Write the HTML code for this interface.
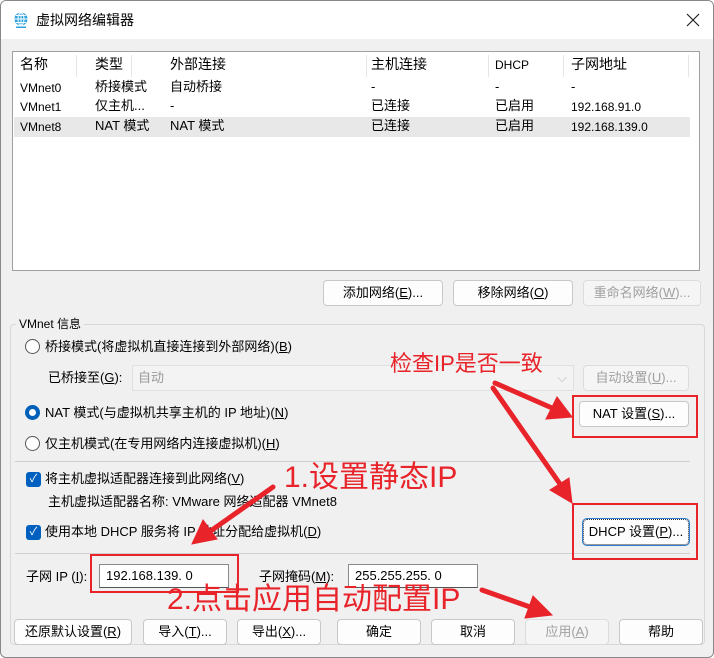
<!DOCTYPE html>
<html><head><meta charset="utf-8"><style>
*{box-sizing:border-box;margin:0;padding:0}
body{width:714px;height:658px;overflow:hidden;background:#fff;font-family:"Liberation Sans","Noto Sans CJK SC",sans-serif;font-size:13px;line-height:18px;color:#000;position:relative}
.a{position:absolute;white-space:nowrap}
.win{position:absolute;left:0;top:0;width:714px;height:658px;border:1px solid #888;border-radius:6px;background:#f0f0f0;overflow:hidden}
.title{position:absolute;left:0;top:0;width:714px;height:38px;background:#fff}
.btn{position:absolute;height:26px;border:1px solid #c8c8c8;border-radius:4px;background:#fdfdfd;text-align:center;line-height:24px;font-size:13px}
.dis{color:#a0a0a0;background:#f5f5f5;border-color:#dcdcdc}
.list{position:absolute;left:11px;top:50px;width:688px;height:220px;background:#fff;border:1px solid #a0a0a0}
.rad{position:absolute;width:15px;height:15px;border:1px solid #555;border-radius:50%;background:#fff}
.chk{position:absolute;width:15px;height:15px;border-radius:3px;background:#0060c0;color:#fff;font-size:11px;line-height:15px;text-align:center}
.red{position:absolute;border:2px solid #e8232a}
.rt{position:absolute;color:#e8232a;white-space:nowrap;line-height:1.2}
.inp{position:absolute;height:24px;background:#fff;border:1px solid #8a8a8a;border-bottom-color:#555;line-height:22px;padding-left:6px}
u{text-decoration:underline}
</style></head><body>
<div class="win">
<div class="title">
<svg class="a" style="left:11px;top:10px" width="18" height="18" viewBox="0 0 18 18"><circle cx="9" cy="8" r="6.5" fill="#2ea3dd"/><path d="M2.5 8h13M9 1.5v13M4 4.5h10M4 11.5h10" stroke="#fff" stroke-width="1" fill="none"/><ellipse cx="9" cy="8" rx="3" ry="6.5" stroke="#fff" fill="none"/><rect x="4" y="15.5" width="10" height="1.5" fill="#2ea3dd"/></svg>
<div class="a" style="left:35px;top:10px;font-size:14px">虚拟网络编辑器</div>
<svg class="a" style="left:685px;top:12px" width="14" height="14"><path d="M1 1L13 13M13 1L1 13" stroke="#222" stroke-width="1.2"/></svg>
</div>
<div class="list">
<div class="a" style="left:63px;top:3px;width:1px;height:22px;background:#e5e5e5"></div>
<div class="a" style="left:118px;top:3px;width:1px;height:22px;background:#e5e5e5"></div>
<div class="a" style="left:353px;top:3px;width:1px;height:22px;background:#e5e5e5"></div>
<div class="a" style="left:475px;top:3px;width:1px;height:22px;background:#e5e5e5"></div>
<div class="a" style="left:550px;top:3px;width:1px;height:22px;background:#e5e5e5"></div>
<div class="a" style="left:675px;top:3px;width:1px;height:22px;background:#e5e5e5"></div>
<div class="a" style="left:1px;top:65px;width:676px;height:20px;background:#e8e8e8"></div>
<div class="a" style="left:7px;top:3px;font-size:14px">名称</div>
<div class="a" style="left:82px;top:3px;font-size:14px">类型</div>
<div class="a" style="left:157px;top:3px;font-size:14px">外部连接</div>
<div class="a" style="left:358px;top:3px;font-size:14px">主机连接</div>
<div class="a" style="left:482px;top:4px;font-size:12px">DHCP</div>
<div class="a" style="left:558px;top:3px;font-size:14px">子网地址</div>
<div class="a" style="left:7px;top:27px;font-size:12px">VMnet0</div><div class="a" style="left:82px;top:26px">桥接模式</div><div class="a" style="left:157px;top:26px">自动桥接</div><div class="a" style="left:358px;top:26px">-</div><div class="a" style="left:482px;top:26px">-</div><div class="a" style="left:558px;top:26px">-</div>
<div class="a" style="left:7px;top:46px;font-size:12px">VMnet1</div><div class="a" style="left:82px;top:45px">仅主机...</div><div class="a" style="left:157px;top:45px">-</div><div class="a" style="left:358px;top:45px">已连接</div><div class="a" style="left:482px;top:45px">已启用</div><div class="a" style="left:558px;top:46px;font-size:12px">192.168.91.0</div>
<div class="a" style="left:7px;top:66px;font-size:12px">VMnet8</div><div class="a" style="left:82px;top:65px">NAT 模式</div><div class="a" style="left:157px;top:65px">NAT 模式</div><div class="a" style="left:358px;top:65px">已连接</div><div class="a" style="left:482px;top:65px">已启用</div><div class="a" style="left:558px;top:66px;font-size:12px">192.168.139.0</div>
</div>
<div class="btn" style="left:322px;top:279px;width:120px">添加网络(<u>E</u>)...</div>
<div class="btn" style="left:452px;top:279px;width:120px">移除网络(<u>O</u>)</div>
<div class="btn dis" style="left:582px;top:279px;width:118px">重命名网络(<u>W</u>)...</div>
<div class="a" style="left:9px;top:323px;width:695px;height:321px;border:1px solid #d8d8d8;border-radius:4px"></div>
<div class="a" style="left:15px;top:314px;background:#f0f0f0;padding:0 3px;font-size:12px">VMnet 信息</div>
<div class="rad" style="left:24px;top:338px"></div>
<div class="a" style="left:44px;top:337px">桥接模式(将虚拟机直接连接到外部网络)(<u>B</u>)</div>
<div class="a" style="left:47px;top:368px">已桥接至(<u>G</u>):</div>
<div class="a" style="left:131px;top:364px;width:442px;height:26px;border:1px solid #e0e0e0;background:#f3f3f3;color:#999;padding-left:5px;line-height:24px">自动<span style="position:absolute;right:6px;color:#bbb">⌵</span></div>
<div class="btn dis" style="left:582px;top:364px;width:106px">自动设置(<u>U</u>)...</div>
<div class="rad" style="left:24px;top:404px;border:4px solid #005fb8"></div>
<div class="a" style="left:44px;top:403px">NAT 模式(与虚拟机共享主机的 IP 地址)(<u>N</u>)</div>
<div class="btn" style="left:578px;top:400px;width:110px">NAT 设置(<u>S</u>)...</div>
<div class="rad" style="left:24px;top:435px"></div>
<div class="a" style="left:44px;top:434px">仅主机模式(在专用网络内连接虚拟机)(<u>H</u>)</div>
<div class="a" style="left:14px;top:460px;width:675px;height:1px;background:#cfcfcf"></div>
<div class="chk" style="left:25px;top:471px">✓</div>
<div class="a" style="left:44px;top:469px">将主机虚拟适配器连接到此网络(<u>V</u>)</div>
<div class="a" style="left:47px;top:492px">主机虚拟适配器名称: VMware 网络适配器 VMnet8</div>
<div class="chk" style="left:25px;top:524px">✓</div>
<div class="a" style="left:44px;top:522px">使用本地 DHCP 服务将 IP 地址分配给虚拟机(<u>D</u>)</div>
<div class="btn" style="left:582px;top:518px;width:106px;border:1px dotted #333;outline:1px solid #2a7fd4">DHCP 设置(<u>P</u>)...</div>
<div class="a" style="left:14px;top:552px;width:675px;height:1px;background:#cfcfcf"></div>
<div class="a" style="left:25px;top:567px">子网 IP (<u>I</u>):</div>
<div class="inp" style="left:98px;top:563px;width:130px">192.168.139. 0</div>
<div class="a" style="left:258px;top:567px">子网掩码(<u>M</u>):</div>
<div class="inp" style="left:347px;top:563px;width:130px">255.255.255. 0</div>
<div class="btn" style="left:13px;top:618px;width:118px">还原默认设置(<u>R</u>)</div>
<div class="btn" style="left:142px;top:618px;width:84px">导入(<u>T</u>)...</div>
<div class="btn" style="left:236px;top:618px;width:84px">导出(<u>X</u>)...</div>
<div class="btn" style="left:336px;top:618px;width:84px">确定</div>
<div class="btn" style="left:430px;top:618px;width:84px">取消</div>
<div class="btn dis" style="left:524px;top:618px;width:84px">应用(<u>A</u>)</div>
<div class="btn" style="left:618px;top:618px;width:84px">帮助</div>
</div>
<div class="red" style="left:572px;top:395px;width:126px;height:43px"></div>
<div class="red" style="left:572px;top:503px;width:126px;height:57px"></div>
<div class="red" style="left:90px;top:554px;width:149px;height:39px"></div>
<div class="rt" style="left:390px;top:351px;font-size:22px">检查IP是否一致</div>
<div class="rt" style="left:284px;top:460px;font-size:30px">1.设置静态IP</div>
<div class="rt" style="left:167px;top:582px;font-size:30px">2.点击应用自动配置IP</div>
<svg class="a" style="left:0;top:0" width="714" height="658">
<g stroke="#e8232a" stroke-width="5" fill="#e8232a" stroke-linecap="round">
<line x1="495" y1="383" x2="552" y2="408"/><polygon points="572,417 546,419 557,397" stroke-width="1"/>
<line x1="493" y1="388" x2="560" y2="484"/><polygon points="572,503 550,490 569,478" stroke-width="1"/>
<line x1="273" y1="487" x2="212" y2="530"/><polygon points="192,544 203,520 217,539" stroke-width="1"/>
<line x1="482" y1="590" x2="530" y2="607"/><polygon points="552,615 525,618 533,596" stroke-width="1"/>
</g></svg>
</body></html>
